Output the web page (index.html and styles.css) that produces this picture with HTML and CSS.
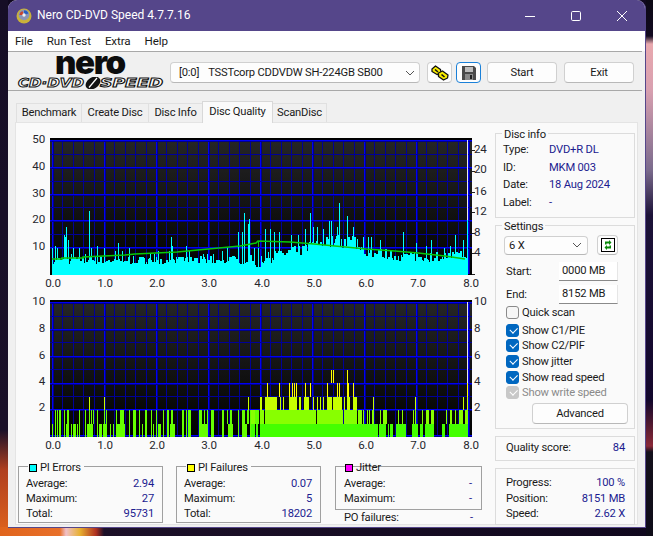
FILE: index.html
```html
<!DOCTYPE html>
<html lang="en">
<head>
<meta charset="utf-8">
<title>Nero CD-DVD Speed 4.7.7.16</title>
<link rel="stylesheet" href="styles.css">
</head>
<body>
<div class="window">
  <header class="titlebar">
    <svg class="app-icon" viewBox="0 0 16 16" aria-hidden="true">
      <circle cx="8" cy="8" r="7.5" fill="#c9b23a"/>
      <circle cx="8" cy="6.8" r="5.4" fill="#8c95b5"/>
      <path d="M8 2.2a4.6 4.6 0 0 1 4.4 3.4L8 7z" fill="#2a5fc0"/>
      <path d="M3.4 7a4.6 4.6 0 0 1 3-4L8 7z" fill="#c9452f"/>
      <circle cx="8" cy="7" r="1.7" fill="#f2f2f2"/>
    </svg>
    <span class="title-text">Nero CD-DVD Speed 4.7.7.16</span>
    <div class="win-controls">
      <svg viewBox="0 0 10 10" aria-hidden="true"><path d="M0 5.500h10" stroke="#fff" fill="none"/></svg>
      <svg viewBox="0 0 10 10" aria-hidden="true"><rect x=".5" y=".5" width="9" height="9" rx="1.2" stroke="#fff" fill="none"/></svg>
      <svg viewBox="0 0 10 10" aria-hidden="true"><path d="M0 0l10 10M10 0L0 10" stroke="#fff" fill="none"/></svg>
    </div>
  </header>
  <nav class="menubar">
    <span>File</span><span>Run Test</span><span>Extra</span><span>Help</span>
  </nav>
  <div class="toolbar">
    <div class="logo">
      <div class="logo-nero">nero</div>
      <div class="logo-sub">
        <span class="logo-word word-a">CD·DVD</span>
        <svg class="logo-disc" viewBox="0 0 16 12" aria-hidden="true"><ellipse cx="8" cy="6" rx="8" ry="5.6" transform="rotate(-32 8 6)" fill="#111"/><path d="M4 10.500L12 1" stroke="#fff" stroke-width="1.2"/></svg>
        <span class="logo-word word-b">SPEED</span>
      </div>
    </div>
    <div class="combo drive">
      <span class="drive-text"><span class="drive-id">[0:0]</span>TSSTcorp CDDVDW SH-224GB SB00</span>
      <svg class="chev" viewBox="0 0 10 6" aria-hidden="true"><path d="M1 1l4 4 4-4" stroke="#555" fill="none"/></svg>
    </div>
    <button class="btn icon-btn">
      <svg viewBox="0 0 18 16" aria-hidden="true">
        <g stroke="#111" stroke-width="1.300" stroke-linejoin="round">
          <path d="M1 4l3.500-3 5 3.500.5 4-4 1-5-3z" fill="#f8ec00"/>
          <path d="M7.500 8l4-2 5.500 4-.5 3-4 2-5-3.500z" fill="#f8ec00"/>
        </g>
        <path d="M4 4.500l3 2.500M10.500 9.500l3 2.500" stroke="#111" stroke-width="1.600"/>
      </svg>
    </button>
    <button class="btn icon-btn save-btn">
      <svg viewBox="0 0 14 14" aria-hidden="true">
        <path d="M0 0h12l2 2v12H0z" fill="#4a4a4a"/>
        <rect x="3" y="1" width="8" height="5" fill="#bdbdbd"/>
        <rect x="3" y="8" width="8" height="6" fill="#8a8a8a"/>
        <rect x="8" y="9" width="2" height="4" fill="#222"/>
      </svg>
    </button>
    <button class="btn act-btn">Start</button>
    <button class="btn act-btn exit-btn">Exit</button>
  </div>
  <div class="tabs">
    <span class="tab tab-bench">Benchmark</span>
    <span class="tab tab-create">Create Disc</span>
    <span class="tab tab-info">Disc Info</span>
    <span class="tab tab-active">Disc Quality</span>
    <span class="tab tab-scan">ScanDisc</span>
  </div>
  <main class="panel">
    <section class="left-col">
      <svg class="chart chart-top" viewBox="15 130 480 160" aria-label="PI errors chart">
        <defs>
          <linearGradient id="plotbg" x1="0" y1="0" x2="0" y2="1">
            <stop offset="0" stop-color="#262626"/>
            <stop offset="1" stop-color="#000"/>
          </linearGradient>
        </defs>
        <rect x="50" y="138" width="422" height="137" fill="url(#plotbg)"/>
        <g id="top-layers"></g>
        <g class="ax-l">
          <text x="45" y="143">50</text><text x="45" y="170">40</text><text x="45" y="197">30</text><text x="45" y="223">20</text><text x="45" y="250">10</text>
        </g>
        <g class="ax-r">
          <text x="474" y="153">24</text><text x="474" y="173">20</text><text x="474" y="195">16</text><text x="474" y="215">12</text><text x="474" y="236">8</text><text x="474" y="256">4</text>
        </g>
        <g class="ax-b">
          <text x="53" y="287">0.0</text><text x="105" y="287">1.0</text><text x="157" y="287">2.0</text><text x="209" y="287">3.0</text><text x="262" y="287">4.0</text><text x="314" y="287">5.0</text><text x="366" y="287">6.0</text><text x="418" y="287">7.0</text><text x="471" y="287">8.0</text>
        </g>
      </svg>
      <svg class="chart chart-bottom" viewBox="15 290 480 165" aria-label="PI failures chart">
        <rect x="50" y="300" width="422" height="137" fill="url(#plotbg)"/>
        <g id="bottom-layers"></g>
        <g class="ax-l">
          <text x="45" y="305">10</text><text x="45" y="332">8</text><text x="45" y="359">6</text><text x="45" y="385">4</text><text x="45" y="411">2</text>
        </g>
        <g class="ax-r">
          <text x="474" y="305">10</text><text x="474" y="332">8</text><text x="474" y="359">6</text><text x="474" y="385">4</text><text x="474" y="411">2</text>
        </g>
        <g class="ax-b">
          <text x="53" y="449">0.0</text><text x="105" y="449">1.0</text><text x="157" y="449">2.0</text><text x="209" y="449">3.0</text><text x="262" y="449">4.0</text><text x="314" y="449">5.0</text><text x="366" y="449">6.0</text><text x="418" y="449">7.0</text><text x="471" y="449">8.0</text>
        </g>
      </svg>
      <div class="stats">
        <div class="stat-col">
          <div class="stat-box">
            <div class="stat-legend"><i class="swatch sw-cyan"></i>PI Errors</div>
            <div class="kv"><span>Average:</span><b>2.94</b></div>
            <div class="kv"><span>Maximum:</span><b>27</b></div>
            <div class="kv"><span>Total:</span><b>95731</b></div>
          </div>
        </div>
        <div class="stat-col">
          <div class="stat-box">
            <div class="stat-legend"><i class="swatch sw-yellow"></i>PI Failures</div>
            <div class="kv"><span>Average:</span><b>0.07</b></div>
            <div class="kv"><span>Maximum:</span><b>5</b></div>
            <div class="kv"><span>Total:</span><b>18202</b></div>
          </div>
        </div>
        <div class="stat-col jitter-col">
          <div class="stat-box jitter-box">
            <div class="stat-legend clear-legend"><i class="swatch sw-mag"></i>Jitter</div>
            <div class="kv"><span>Average:</span><b>-</b></div>
            <div class="kv"><span>Maximum:</span><b>-</b></div>
          </div>
          <div class="kv po-row"><span>PO failures:</span><b>-</b></div>
        </div>
      </div>
    </section>
    <aside class="right-col">
      <div class="group info-group">
        <div class="group-legend">Disc info</div>
        <div class="info-row"><span>Type:</span><b>DVD+R DL</b></div>
        <div class="info-row"><span>ID:</span><b>MKM 003</b></div>
        <div class="info-row"><span>Date:</span><b>18 Aug 2024</b></div>
        <div class="info-row"><span>Label:</span><b>-</b></div>
      </div>
      <div class="group settings-group">
        <div class="group-legend">Settings</div>
        <div class="speed-row">
          <div class="combo speed"><span>6 X</span><svg class="chev" viewBox="0 0 10 6" aria-hidden="true"><path d="M1 1l4 4 4-4" stroke="#555" fill="none"/></svg></div>
          <button class="btn refresh-btn">
            <svg viewBox="0 0 14 14" aria-hidden="true">
              <rect x=".5" y=".5" width="13" height="13" fill="#fff" stroke="#000"/>
              <path d="M4 6.500V3.500h4V2l2.500 2.500L8 7V5.500H5.500v1z" fill="#0a8a0a"/>
              <path d="M10 7.500v3H6V12L3.500 9.500 6 7v1.500h2.500v-1z" fill="#0a8a0a"/>
            </svg>
          </button>
        </div>
        <div class="range-row start-row"><span>Start:</span><div class="field">0000 MB</div></div>
        <div class="range-row end-row"><span>End:</span><div class="field">8152 MB</div></div>
        <label class="check quick"><i class="box"></i>Quick scan</label>
        <label class="check c1"><i class="box on"></i>Show C1/PIE</label>
        <label class="check c2"><i class="box on"></i>Show C2/PIF</label>
        <label class="check c3"><i class="box on"></i>Show jitter</label>
        <label class="check c4"><i class="box on"></i>Show read speed</label>
        <label class="check c5 disabled"><i class="box off"></i>Show write speed</label>
        <button class="btn advanced">Advanced</button>
      </div>
      <div class="group score-group">
        <div class="kv"><span>Quality score:</span><b>84</b></div>
      </div>
      <div class="group progress-group">
        <div class="kv"><span>Progress:</span><b>100 %</b></div>
        <div class="kv"><span>Position:</span><b>8151 MB</b></div>
        <div class="kv"><span>Speed:</span><b>2.62 X</b></div>
      </div>
    </aside>
  </main>
</div>
<script src="charts.js"></script>
</body>
</html>
```
FILE: styles.css
```css
* { box-sizing: border-box; }
html, body { margin: 0; height: 536px; overflow: hidden; }
body {
  width: 653px;
  padding: 0 7px 8px 8px;
  font: 11.2px/15px Roboto, "Noto Sans", sans-serif;
  letter-spacing: -.2px;
  color: #1a1a1a;
  background:
    linear-gradient(to bottom, #0c0814 0, #120a20 36px, #e8a8ae 44px, #d8a0b0 90px, #7a6a8c 170px, #1c1238 215px, #12062c 400px, #5a1c30 428px, #8a2838 446px, #14101c 452px, #0e0c18 536px) right top / 7px 536px no-repeat,
    linear-gradient(to right, #e0641c 0, #e8702a 60px, #f0c0c8 66px, #e8b030 80px, #b03020 96px, #1c1028 104px, #10081e 653px) left bottom / 653px 9px no-repeat,
    linear-gradient(to bottom, #160e26 0, #1a1028 430px, #b04020 470px, #e0641c 536px) left top / 8px 536px no-repeat,
    #10081e;
}
.window {
  width: 638px;
  height: 528px;
  display: flex;
  flex-direction: column;
  background: #f0f0f0;
  border: solid #55468a;
  border-width: 0 1px 1px 0;
  border-radius: 9px 9px 0 0;
  overflow: hidden;
}
.titlebar {
  flex: none;
  height: 31px;
  display: flex;
  align-items: center;
  background: #55468a;
  color: #fff;
  padding-left: 8px;
  font-size: 12px;
  letter-spacing: 0;
}
.app-icon { width: 16px; height: 16px; margin-right: 5px; }
.title-text { flex: 1; }
.win-controls { display: flex; align-items: center; margin-right: 18px; gap: 36px; }
.win-controls svg { width: 10px; height: 10px; display: block; }
.menubar {
  flex: none;
  height: 20px;
  background: #fff;
  display: flex;
  align-items: center;
  padding-left: 7px;
  font-size: 11.600px;
  letter-spacing: -.1px;
}
.menubar span { margin-right: 14px; }
.toolbar {
  flex: none;
  height: 40px;
  margin-right: 3px;
  display: flex;
  align-items: center;
  border-top: 1px solid #a8a8a8;
  border-bottom: 1px solid #a8a8a8;
  padding: 3px 0 0 10px;
}
.logo { width: 152px; flex: none; margin-top: -3px; color: #0c0c0c; letter-spacing: 0; }
.logo-nero {
  font: 900 33px/19px "Inter", "Liberation Sans", sans-serif;
  letter-spacing: -1.4px;
  margin-left: 37px;
}
.logo-sub { display: flex; align-items: center; height: 13px; margin-top: 4px; }
.logo-word {
  display: block;
  flex: none;
  font: italic 700 13px/13px "DejaVu Sans", sans-serif;
  color: #fff;
  -webkit-text-stroke: 1px #111;
  transform-origin: left center;
  white-space: nowrap;
}
.word-a { width: 64px; transform: scaleX(1.16); }
.word-b { width: 62px; transform: scaleX(1.33); }
.logo-disc { width: 16px; height: 12px; margin: 0 -1px 0 3px; flex: none; }
.combo {
  display: flex;
  align-items: center;
  justify-content: space-between;
  background: #fdfdfd;
  border: 1px solid #d0d0d0;
  border-bottom-color: #b8b8b8;
  border-radius: 4px;
}
.chev { width: 10px; height: 6px; flex: none; }
.drive { width: 250px; height: 21px; padding: 0 4px 0 8px; flex: none; }
.drive-id { margin-right: 9px; }
.btn {
  font: inherit;
  letter-spacing: inherit;
  color: inherit;
  padding: 0;
  background: #fdfdfd;
  border: 1px solid #d0d0d0;
  border-bottom-color: #b8b8b8;
  border-radius: 4px;
  display: flex;
  align-items: center;
  justify-content: center;
}
.icon-btn { width: 25px; height: 21px; margin-left: 7px; flex: none; }
.icon-btn svg { width: 18px; height: 16px; display: block; }
.save-btn { margin-left: 4px; width: 25px; border: 1px solid #1a80d8; }
.save-btn svg { width: 14px; height: 14px; }
.act-btn { width: 70px; height: 21px; margin-left: 6px; flex: none; }
.exit-btn { margin-left: 7px; }
.tabs {
  flex: none;
  height: 31px;
  display: flex;
  align-items: flex-end;
  padding-left: 8px;
}
.tab {
  height: 19px;
  padding-top: 1px;
  text-align: center;
  background: #f0f0f0;
  border: 1px solid #e0e0e0;
  border-bottom: 0;
  margin-right: -1px;
}
.tab-bench { width: 66px; }
.tab-create { width: 68px; }
.tab-info { width: 55px; }
.tab-active { width: 71px; height: 22px; background: #fafafa; border-color: #d8d8d8; position: relative; z-index: 1; padding-top: 2px; margin-bottom: -1px; }
.tab-scan { width: 55px; }
.panel {
  flex: none;
  width: 623px;
  height: 403px;
  margin-left: 7px;
  display: flex;
  background: #fafafa;
  border: 1px solid #e4e4e4;
}
.left-col { width: 480px; flex: none; margin-left: -1px; padding-top: 7px; }
.chart { display: block; }
.chart-top { width: 480px; height: 160px; }
.chart-bottom { width: 480px; height: 165px; }
.chart text { font: 11.600px Roboto, "Noto Sans", sans-serif; letter-spacing: -.2px; fill: #26262e; }
.ax-l text { text-anchor: end; }
.ax-b text { text-anchor: middle; }
.stats { display: flex; margin-top: 11px; padding-left: 3px; }
.stat-col { width: 145px; margin-right: 13px; flex: none; }
.jitter-col { width: 147px; margin-left: 1px; margin-right: 0; }
.stat-box {
  border: 1px solid #a0a0a0;
  height: 57px;
  padding: 0 8px 0 7px;
}
.jitter-box { height: 44px; padding: 0 9px 0 8px; }
.stat-legend {
  width: fit-content;
  height: 15px;
  margin: -7px 0 1px 2px;
  padding: 0 3px 0 1px;
  background: #fafafa;
  display: flex;
  align-items: center;
}
.clear-legend { background: none; margin-left: 0; }
.swatch {
  width: 8px;
  height: 8px;
  border: 1px solid #000;
  margin-right: 3px;
  flex: none;
}
.sw-cyan { background: #00ffff; }
.sw-yellow { background: #ffff00; }
.sw-mag { background: #ff00ff; }
.kv { display: flex; justify-content: space-between; height: 15px; }
.kv b, .info-row b { font-weight: 400; color: #1c1c90; }
.po-row { padding: 0 9px 0 9px; margin-top: 0; }
.right-col { width: 140px; flex: none; padding-top: 10px; }
.group { border: 1px solid #dcdcdc; margin-bottom: 7px; }
.group-legend {
  width: fit-content;
  margin: -7px 0 -2px 6px;
  padding: 0 2px;
  background: #fafafa;
  height: 15px;
}
.info-group { height: 85px; padding: 0 7px; }
.info-group .group-legend { margin: -7px 0 -1px -1px; }
.info-row { display: flex; height: 17.500px; align-items: center; }
.info-row span { width: 46px; }
.settings-group { height: 204px; }
.speed-row { display: flex; align-items: center; margin: 3px 0 0 8px; }
.speed { width: 84px; height: 19px; padding: 0 5px 0 4px; }
.refresh-btn { width: 21px; height: 20px; margin-left: 9px; }
.refresh-btn svg { width: 14px; height: 14px; display: block; }
.range-row { display: flex; align-items: center; justify-content: space-between; padding: 0 16px 0 10px; }
.start-row { margin-top: 7px; }
.end-row { margin-top: 4px; }
.field {
  width: 59px;
  height: 19px;
  background: #fff;
  border-bottom: 1px solid #8a8a8a;
  border-right: 1px solid #e6e6e6;
  padding: 1px 0 0 3px;
}
.check { display: flex; align-items: center; height: 15px; padding-left: 10px; }
.box {
  width: 13px;
  height: 13px;
  margin-right: 3px;
  border: 1px solid #8a8a8a;
  border-radius: 3px;
  background: #f6f6f6;
  flex: none;
  position: relative;
}
.box.on { background: #0067c0; border-color: #0067c0; }
.box.off { background: #c8c8c8; border-color: #c8c8c8; }
.box.on::after, .box.off::after {
  content: "";
  position: absolute;
  left: 3px;
  top: 2px;
  width: 6px;
  height: 3.5px;
  border: solid #fff;
  border-width: 0 0 1px 1px;
  transform: rotate(-45deg);
}
.quick { margin-top: 1px; }
.c1 { margin-top: 3px; }
.c2 { margin-top: 0; }
.c3 { margin-top: 1px; }
.c4 { margin-top: 1px; }
.c5 { margin-top: 0; }
.disabled { color: #8a8a8a; }
.advanced { width: 96px; height: 21px; margin: 3px 0 0 36px; }
.score-group { height: 25px; padding: 3px 9px 0 10px; }
.progress-group { height: 57px; padding: 6px 9px 0 10px; margin-bottom: 0; }
.progress-group .kv { height: 15.5px; }
```
FILE: charts.js
```js
const NS = 'http://www.w3.org/2000/svg';
function rect(g, x, y, w, h, fill) {
  const r = document.createElementNS(NS, 'rect');
  r.setAttribute('x', x); r.setAttribute('y', y);
  r.setAttribute('width', w); r.setAttribute('height', h);
  r.setAttribute('fill', fill);
  r.setAttribute('shape-rendering', 'crispEdges');
  g.appendChild(r);
}
let seed = 7;
function rnd() { seed = (seed * 16807) % 2147483647; return seed / 2147483647; }

function grid(g, top, bottom, majors, minors) {
  const MIN = '#000098', MAJ = '#0000f4', HALF = '#00008c';
  for (let i = 0; i <= 40; i++) {
    const x = Math.round(52 + i * 10.4);
    rect(g, x, top, 1, bottom - top, i % 5 === 0 ? MAJ : MIN);
    if (i % 5 === 0) rect(g, x + 1, top, 1, bottom - top, HALF);
  }
  minors.forEach(y => rect(g, 50, y, 422, 1, MIN));
  majors.forEach(y => { rect(g, 50, y, 422, 1, MAJ); rect(g, 50, y + 1, 422, 1, HALF); });
}

/* ---------- top chart ---------- */
const topG = document.getElementById('top-layers');
rect(topG, 50, 138, 422, 2, '#000');
grid(topG, 140, 274, [140, 167, 194, 220, 247], [154, 181, 207, 234]);

const ENV = [[52,7,4],[200,7,4],[250,7.5,4],[256,3,2.9],[261,3,2.9],[263,8,4],[290,11,6],[300,11,7],[310,13,8],[315,15,10],[335,15,10],[345,16,10],[358,16,9],[362,11,7],[380,10,6],[400,9,5],[430,9,5],[468,9,6]];
function env(x) {
  for (let i = 1; i < ENV.length; i++) {
    if (x <= ENV[i][0]) {
      const a = ENV[i - 1], b = ENV[i], t = (x - a[0]) / (b[0] - a[0]);
      return [a[1] + (b[1] - a[1]) * t, a[2] + (b[2] - a[2]) * t];
    }
  }
  return [9, 6];
}
const heights = {};
for (let x = 52; x < 467; x++) {
  if (x % 2 === 0 || rnd() < 0.3) {
    const e = env(x);
    heights[x] = e[1] + (e[0] - e[1]) * rnd();
  } else heights[x] = heights[x - 1];
}
const P_L = [[127,10],[136,11],[142,10],[163,15],[166,14],[169,18],[175,13],[184,8],[190,10],[208,10],[226,8],[238,24],[244,10],[262,11],[283,10],[316,9],[325,12],[337,9],[358,10],[421,8],[433,8],[445,9],[478,9],[484,14],[487,11],[529,11],[538,9],[580,8],[592,8],[610,8],[637,9],[652,10],[685,16],[697,16],[703,23],[715,19],[718,21],[733,10],[745,10]];
P_L.forEach(p => { heights[Math.round(10 + p[0] / 3)] = p[1]; });
const P_R = [[34,7],[46,17],[61,17],[73,16],[88,16],[124,15],[145,15],[165,17],[181,23],[190,18],[202,18],[220,17],[238,20],[244,20],[262,18],[268,27],[292,22],[310,18],[340,14],[355,14],[364,14],[391,13],[460,16],[497,12],[529,11],[544,13],[583,10],[601,11],[616,15],[640,13]];
P_R.forEach(p => { heights[Math.round(250 + p[0] / 3)] = p[1]; });
for (let x = 52; x < 467; x++) {
  const h = heights[x] * 2.68;
  rect(topG, x, 275 - h, 1, h, '#00ffff');
}
rect(topG, 467, 140, 1, 80, '#e8e8e8');
rect(topG, 467, 220, 1, 55, '#00ffff');

const line = document.createElementNS(NS, 'polyline');
const LINE = [[52,259],[62,259],[62,258],[83,258],[83,257],[104,256],[125,255],[135,254],[156,253],[177,252],[198,250],[219,248],[240,246],[256,243],[258,241],[290,242],[314,244],[335,246],[366,249],[395,251],[418,253],[445,256],[465,259]];
line.setAttribute('points', LINE.map(p => p.join(',')).join(' '));
line.setAttribute('fill', 'none');
line.setAttribute('stroke', '#08c808');
line.setAttribute('stroke-width', '1.6');
topG.appendChild(line);
rect(topG, 258, 241, 1, 6, '#08c808');
for (let i = 0; i <= 6; i++) rect(topG, 472, 274 - i * 20.6, 3, 1, '#222');

/* ---------- bottom chart ---------- */
const bot = document.getElementById('bottom-layers');
rect(bot, 50, 300, 422, 2, '#000');
grid(bot, 302, 437, [302, 329, 356, 383, 409, 435], [316, 342, 369, 396]);

function spans(list, base, y, h, fill) {
  list.forEach(s => {
    const a = Math.round(base + s[0] / 3), b = Math.round(base + s[1] / 3);
    rect(bot, a, y, Math.max(1, b - a), h, fill);
  });
}
const U = 13.4, B = 437;
// left half
spans([[127,130],[184,187],[190,199],[202,205],[169,178],[232,250],[268,277],[280,292],[301,304],[310,313],[322,346],[397,400],[430,433],[445,454],[481,496],[571,595],[607,613],[655,670],[697,712],[724,730],[739,745],[136,139],[142,145],[148,154],[163,166],[208,211],[226,229],[262,265],[319,322],[358,361],[370,379],[388,391],[406,412],[424,427],[439,442],[460,463],[472,478],[517,523],[529,532],[535,544],[568,577],[604,613],[637,643],[661,667],[685,688],[721,724]], 10, B - U, U, '#66ff00');
spans([[136,139],[142,145],[148,154],[163,166],[172,178],[208,211],[226,229],[238,241],[244,247],[250,253],[262,265],[283,286],[289,292],[319,322],[331,343],[358,361],[370,379],[388,391],[406,412],[424,427],[439,442],[460,463],[472,478],[484,490],[517,523],[529,532],[535,544],[568,577],[583,586],[592,595],[604,613],[637,643],[652,655],[661,667],[685,688],[697,706],[712,718],[721,724],[730,748]], 10, B - 2 * U, U, '#66ff00');
spans([[238,241],[283,286],[715,718]], 10, B - 3 * U, U, '#c8ff00');
// right half
spans([[3,15],[18,25],[30,385],[388,409],[415,418],[421,430],[439,469],[487,505],[511,520],[526,553],[577,586],[598,655]], 250, B - U, U, '#44ff00');
spans([[3,15],[30,42],[45,198],[201,280],[282,322],[325,336],[340,343],[352,355],[358,361],[367,373],[391,394],[400,412],[445,448],[457,460],[490,493],[496,499],[517,520],[529,538],[544,553],[589,592],[601,607],[616,619],[628,640],[646,655]], 250, B - 2 * U, U, '#88ff00');
spans([[30,36],[45,82],[90,94],[99,103],[118,142],[146,152],[162,178],[190,193],[202,205],[211,214],[220,223],[232,247],[250,276],[283,286],[292,301],[310,322],[370,373],[496,499],[640,643],[652,655]], 250, B - 3 * U, U, '#c8ff00');
spans([[51,54],[87,90],[118,121],[127,130],[133,136],[139,142],[166,169],[181,184],[232,235],[262,265],[268,271],[292,298],[310,313],[652,655]], 250, B - 4 * U, U, '#ffff00');
spans([[244,247],[250,253],[292,295]], 250, B - 5 * U, U, '#ffff00');
rect(bot, 467, 302, 1, 81, '#e8e8e8');
```
